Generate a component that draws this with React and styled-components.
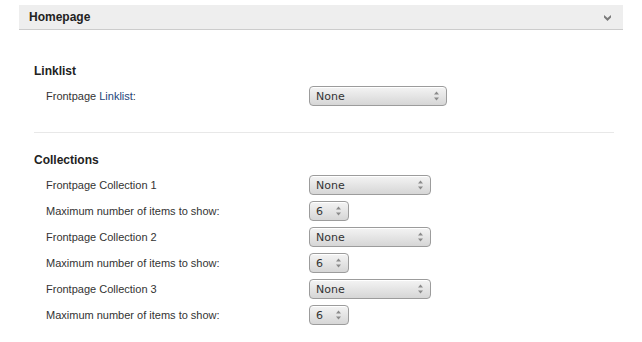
import React from 'react'
import styled, { createGlobalStyle } from 'styled-components';

const GlobalStyle = createGlobalStyle`
  body {
    margin: 0;
    background: #fff;
    font-family: "Liberation Sans", Arial, sans-serif;
    color: #333;
  }
`;

const Page = styled.main`
  padding: 5px 19px 0;
`;

const PanelHeader = styled.header`
  display: flex;
  align-items: center;
  justify-content: space-between;
  height: 24px;
  padding: 0 12px 0 10px;
  background: #eeeeee;
  border-bottom: 1px solid #cccccc;
`;

const PanelTitle = styled.h2`
  margin: 0;
  font-size: 12px;
  line-height: 16px;
  font-weight: bold;
  color: #222;
`;

const Toggle = styled.svg`
  width: 7px;
  height: 6px;
  margin-top: 1px;
`;

const PanelBody = styled.div`
  padding: 33px 9px 0 15px;
`;

const SectionTitle = styled.h3`
  margin: 0 0 7px;
  font-size: 12px;
  line-height: 16px;
  font-weight: bold;
  color: #222;
`;

const Divider = styled.hr`
  margin: 26px 0 19px;
  border: 0;
  border-top: 1px solid #e8e8e8;
`;

const Fields = styled.div`
  display: flex;
  flex-direction: column;
  gap: 6px;
`;

const Field = styled.div`
  display: grid;
  grid-template-columns: 275px auto;
  align-items: center;
  height: 20px;
`;

const Label = styled.label`
  padding-left: 12px;
  font-size: 11px;
  color: #333;
`;

const Link = styled.span`
  color: #23457a;
`;

const SelectBox = styled.div`
  display: flex;
  align-items: center;
  justify-content: space-between;
  box-sizing: border-box;
  width: ${(p) => p.$width}px;
  height: 20px;
  padding: 0 6px 0 6px;
  border: 1px solid #9c9c9c;
  border-radius: 4px;
  background: linear-gradient(#f4f4f4, #d6d6d6);
  box-shadow: inset 0 1px 0 #fff;
  font-family: "DejaVu Sans", sans-serif;
  font-size: 11px;
  color: #333;
`;

const Spinner = styled.svg`
  width: 7px;
  height: 12px;
  flex: none;
`;

const Select = ({ value, width }) => (
  <SelectBox $width={width}>
    <span>{value}</span>
    <Spinner viewBox="0 0 7 12">
      <path d="M3.5 1.5 L6 4.5 H1 Z" fill="#8a8a8a" />
      <path d="M3.5 10.5 L6 7.5 H1 Z" fill="#8a8a8a" />
    </Spinner>
  </SelectBox>
);

const collections = [1, 2, 3];

const App = () => (
  <Page>
    <GlobalStyle />
    <PanelHeader>
      <PanelTitle>Homepage</PanelTitle>
      <Toggle viewBox="0 0 7 6">
        <path d="M0 0 L3.5 3 L7 0 V2.5 L3.5 6 L0 2.5 Z" fill="#7a7a7a" />
      </Toggle>
    </PanelHeader>
    <PanelBody>
      <section>
        <SectionTitle>Linklist</SectionTitle>
        <Fields>
          <Field>
            <Label>Frontpage <Link>Linklist</Link>:</Label>
            <Select value="None" width={138} />
          </Field>
        </Fields>
      </section>
      <Divider />
      <section>
        <SectionTitle>Collections</SectionTitle>
        <Fields>
          {collections.map((n) => (
            <React.Fragment key={n}>
              <Field>
                <Label>Frontpage Collection {n}</Label>
                <Select value="None" width={122} />
              </Field>
              <Field>
                <Label>Maximum number of items to show:</Label>
                <Select value="6" width={40} />
              </Field>
            </React.Fragment>
          ))}
        </Fields>
      </section>
    </PanelBody>
  </Page>
);

export default App;
